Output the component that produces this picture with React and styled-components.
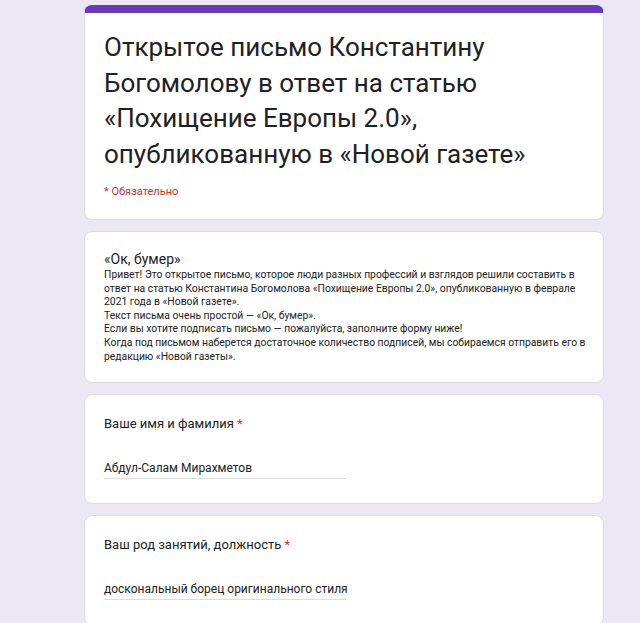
import React from 'react';
import styled, { createGlobalStyle } from 'styled-components';

const GlobalStyle = createGlobalStyle`
  html, body {
    margin: 0;
    padding: 0;
    background: #ebe7f3;
  }
  body {
    font-family: Roboto, "Liberation Sans", Arial, sans-serif;
    color: #202124;
  }
`;

const Page = styled.main`
  display: flex;
  flex-direction: column;
  gap: 11px;
  padding: 5px 0 0 84px;
  width: 520px;
`;

const Card = styled.section`
  background: #fff;
  border: 1px solid #dadce0;
  border-radius: 8px;
  padding: ${(p) => p.$pad || '20px 19px 24px'};
  overflow: hidden;
`;

const HeaderCard = styled(Card)`
  border-top: 8px solid #673ab7;
  padding: 17px 19px 20px;
`;

const Title = styled.h1`
  margin: 0;
  font-size: 26px;
  line-height: 35.5px;
  font-weight: 400;
`;

const Required = styled.div`
  margin-top: 13px;
  font-size: 11px;
  line-height: 14px;
  color: #d93025;
`;

const Heading = styled.h2`
  margin: 0;
  font-size: 14px;
  line-height: 18px;
  font-weight: 400;
`;

const Body = styled.p`
  margin: 0;
  font-size: 10.35px;
  line-height: 13.6px;
`;

const Label = styled.div`
  font-size: 13px;
  line-height: 18px;
`;

const Star = styled.span`
  color: #d93025;
`;

const Answer = styled.div`
  margin-top: 27px;
  width: 242px;
  font-size: 12px;
  line-height: 16px;
  padding-bottom: 2px;
  border-bottom: 1px solid #dadce0;
  white-space: nowrap;
`;

function Question({ label, value }) {
  return (
    <Card>
      <Label>
        {label} <Star>*</Star>
      </Label>
      <Answer>{value}</Answer>
    </Card>
  );
}

export default function App() {
  return (
    <>
      <GlobalStyle />
      <Page>
        <HeaderCard>
          <Title>
            Открытое письмо Константину Богомолову в ответ на статью «Похищение Европы 2.0»,
            опубликованную в «Новой газете»
          </Title>
          <Required>* Обязательно</Required>
        </HeaderCard>

        <Card $pad="18px 10px 19px 19px">
          <Heading>«Ок, бумер»</Heading>
          <Body>
            Привет! Это открытое письмо, которое люди разных профессий и взглядов решили составить в
            ответ на статью Константина Богомолова «Похищение Европы 2.0», опубликованную в феврале
            2021 года в «Новой газете».
            <br />
            Текст письма очень простой — «Ок, бумер».
            <br />
            Если вы хотите подписать письмо — пожалуйста, заполните форму ниже!
            <br />
            Когда под письмом наберется достаточное количество подписей, мы собираемся отправить его в
            редакцию «Новой газеты».
          </Body>
        </Card>

        <Question label="Ваше имя и фамилия" value="Абдул-Салам Мирахметов" />
        <Question label="Ваш род занятий, должность" value="доскональный борец оригинального стиля" />
      </Page>
    </>
  );
}
